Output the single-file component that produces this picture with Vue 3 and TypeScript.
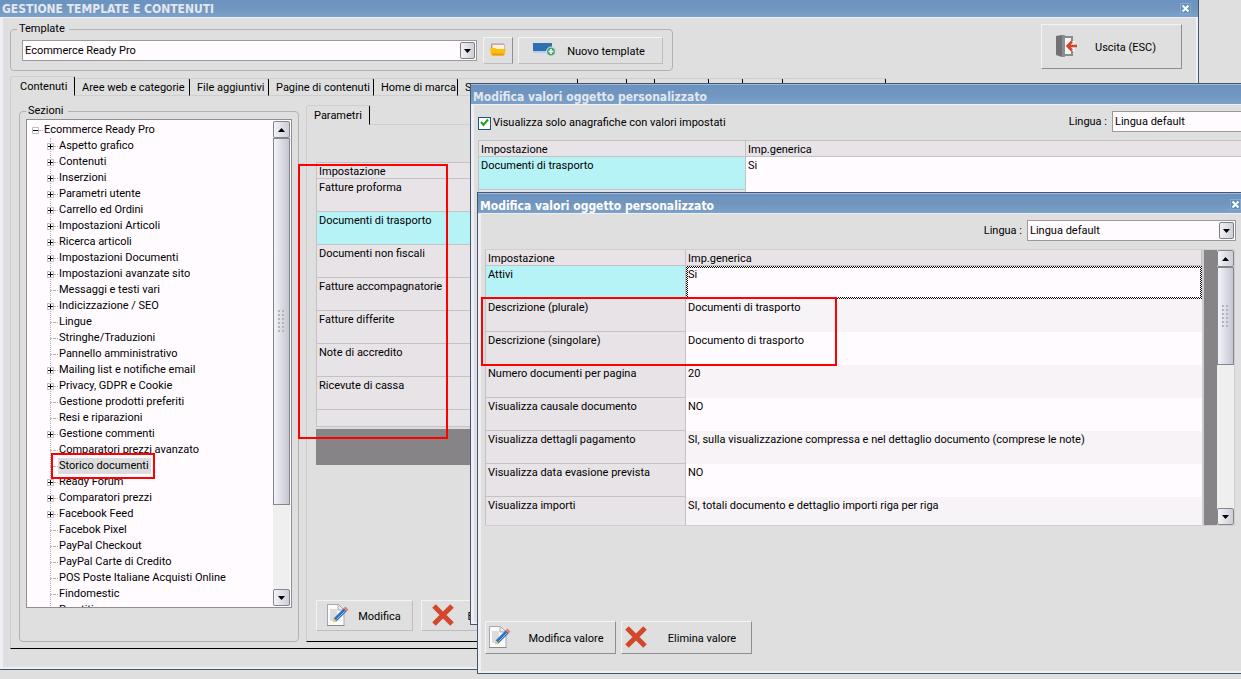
<script setup lang="ts">
import { ref } from 'vue'

interface Tab { label: string; width: number }
interface TreeNode { label: string; branch: boolean }
interface Setting { name: string; value: string }

const tabs: Tab[] = [
  { label: 'Contenuti', width: 65 },
  { label: 'Aree web e categorie', width: 115 },
  { label: 'File aggiuntivi', width: 79 },
  { label: 'Pagine di contenuti', width: 105 },
  { label: 'Home di marca', width: 84 },
  { label: 'S', width: 120 },
  { label: '', width: 49 },
  { label: '', width: 28 },
  { label: '', width: 54 },
  { label: '', width: 34 },
  { label: '', width: 40 },
  { label: '', width: 103 },
]

const sections: TreeNode[] = [
  { label: 'Aspetto grafico', branch: true },
  { label: 'Contenuti', branch: true },
  { label: 'Inserzioni', branch: true },
  { label: 'Parametri utente', branch: true },
  { label: 'Carrello ed Ordini', branch: true },
  { label: 'Impostazioni Articoli', branch: true },
  { label: 'Ricerca articoli', branch: true },
  { label: 'Impostazioni Documenti', branch: true },
  { label: 'Impostazioni avanzate sito', branch: true },
  { label: 'Messaggi e testi vari', branch: false },
  { label: 'Indicizzazione / SEO', branch: true },
  { label: 'Lingue', branch: false },
  { label: 'Stringhe/Traduzioni', branch: false },
  { label: 'Pannello amministrativo', branch: false },
  { label: 'Mailing list e notifiche email', branch: true },
  { label: 'Privacy, GDPR e Cookie', branch: true },
  { label: 'Gestione prodotti preferiti', branch: false },
  { label: 'Resi e riparazioni', branch: false },
  { label: 'Gestione commenti', branch: true },
  { label: 'Comparatori prezzi avanzato', branch: false },
  { label: 'Storico documenti', branch: false },
  { label: 'Ready Forum', branch: true },
  { label: 'Comparatori prezzi', branch: true },
  { label: 'Facebook Feed', branch: true },
  { label: 'Facebok Pixel', branch: false },
  { label: 'PayPal Checkout', branch: false },
  { label: 'PayPal Carte di Credito', branch: false },
  { label: 'POS Poste Italiane Acquisti Online', branch: false },
  { label: 'Findomestic', branch: false },
  { label: 'Prestiti', branch: false },
]

const documentTypes: string[] = [
  'Fatture proforma',
  'Documenti di trasporto',
  'Documenti non fiscali',
  'Fatture accompagnatorie',
  'Fatture differite',
  'Note di accredito',
  'Ricevute di cassa',
]

const settings: Setting[] = [
  { name: 'Attivi', value: 'Si' },
  { name: 'Descrizione (plurale)', value: 'Documenti di trasporto' },
  { name: 'Descrizione (singolare)', value: 'Documento di trasporto' },
  { name: 'Numero documenti per pagina', value: '20' },
  { name: 'Visualizza causale documento', value: 'NO' },
  { name: 'Visualizza dettagli pagamento', value: 'SI, sulla visualizzazione compressa e nel dettaglio documento (comprese le note)' },
  { name: 'Visualizza data evasione prevista', value: 'NO' },
  { name: 'Visualizza importi', value: 'SI, totali documento e dettaglio importi riga per riga' },
]

const activeTab = ref(0)
const activeSection = ref('Storico documenti')
const activeType = ref('Documenti di trasporto')
const onlySet = ref(true)
</script>

<template>
  <main class="desktop">
    <section class="window window-main" aria-label="Gestione template e contenuti">
      <header class="titlebar">
        <h1>GESTIONE TEMPLATE E CONTENUTI</h1>
        <button class="close" type="button" aria-label="Chiudi">
          <svg viewBox="0 0 11 11"><path d="M2.500 2.500l6 6M8.500 2.500l-6 6" stroke="#fff" stroke-width="2" /></svg>
        </button>
      </header>
      <div class="main-body">
        <div class="topbar">
          <fieldset class="group template-group">
            <legend>Template</legend>
            <div class="template-row">
              <div class="combo combo-template">
                <select aria-label="Template"><option>Ecommerce Ready Pro</option></select>
                <span class="drop"><svg viewBox="0 0 7 4"><path d="M0 0h7L3.500 4z" /></svg></span>
              </div>
              <button class="btn btn-folder" type="button" aria-label="Apri">
                <svg class="ico-folder" viewBox="0 0 16 13">
                  <path d="M1.500 1h12.500v6H1.500z" fill="#f2c878" stroke="#b98bd0" stroke-width="1" />
                  <path d="M3 2h11v4H3z" fill="#fff3d8" />
                  <path d="M0 5h5l2 1h9l-1.500 5.500-1 1H2l-1-1z" fill="#fdc012" />
                  <path d="M1.500 10.500h13l-1 2H2.500z" fill="#e79a06" />
                </svg>
              </button>
              <button class="btn btn-new" type="button">
                <svg class="ico-new" viewBox="0 0 23 15">
                  <path d="M0 1h19v9H0z" fill="#2f6fb3" />
                  <path d="M0 9h14v2H0z" fill="#b9cbea" />
                  <circle cx="18" cy="9.500" r="4.500" fill="#47a078" stroke="#d7e8e0" />
                  <path d="M18 7v5M15.500 9.500h5" stroke="#fff" stroke-width="1.500" />
                </svg>
                <span>Nuovo template</span>
              </button>
            </div>
          </fieldset>
          <button class="btn raised btn-exit" type="button">
            <svg class="ico-exit" viewBox="0 0 22 22">
              <path d="M9 2h7v18H9" fill="#f6f4f6" stroke="#8b8b8b" stroke-width="2" />
              <path d="M0 1l6-1h3v22H6l-6-2z" fill="#727274" />
              <path d="M6 0h3v22H6z" fill="#8d8d90" />
              <path d="M14 6h5v10h-5z" fill="#efedef" />
              <path d="M12 11h9M16 6.500L11.500 11l4.500 4.500" fill="none" stroke="#d6452b" stroke-width="2.500" />
            </svg>
            <span>Uscita (ESC)</span>
          </button>
        </div>

        <nav class="tabs" role="tablist">
          <button
            v-for="(tab, i) in tabs"
            :key="i"
            class="tab"
            :class="{ active: i === activeTab }"
            type="button"
            role="tab"
            :aria-selected="i === activeTab"
            :style="{ width: tab.width + 'px' }"
            @click="activeTab = i"
          >{{ tab.label }}</button>
          <span class="tab-rest"></span>
        </nav>

        <div class="panel panel-outer">
          <fieldset class="group sections-group">
            <legend>Sezioni</legend>
            <div class="tree-box">
              <ul class="tree">
                <li>
                  <div class="node root">
                    <button class="expander" type="button" aria-label="Comprimi">
                      <svg viewBox="0 0 7 7"><path d="M.500.500h6v6h-6z" fill="#fff" stroke="#bdbbc0" /><path d="M1 3.500h5" stroke="#000" /></svg>
                    </button>
                    <span class="dots"></span>
                    <span class="caption">Ecommerce Ready Pro</span>
                  </div>
                  <ul class="children">
                    <li v-for="node in sections" :key="node.label" class="node">
                      <button v-if="node.branch" class="expander" type="button" aria-label="Espandi">
                        <svg viewBox="0 0 7 7"><path d="M.500.500h6v6h-6z" fill="#fff" stroke="#bdbbc0" /><path d="M1 3.500h5M3.500 1v5" stroke="#000" /></svg>
                      </button>
                      <span v-else class="expander leaf"></span>
                      <span class="dots"></span>
                      <span
                        class="caption"
                        :class="{ selected: node.label === activeSection }"
                        @click="activeSection = node.label"
                      >{{ node.label }}</span>
                    </li>
                  </ul>
                </li>
              </ul>
              <div class="scroll">
                <button class="arrow" type="button" aria-label="Su"><svg viewBox="0 0 7 4"><path d="M3.500 0L7 4H0z" /></svg></button>
                <div class="thumb thumb-tree"><i class="grip"></i></div>
                <div class="track"></div>
                <button class="arrow" type="button" aria-label="Giù"><svg viewBox="0 0 7 4"><path d="M0 0h7L3.500 4z" /></svg></button>
              </div>
            </div>
          </fieldset>

          <div class="params">
            <nav class="tabs" role="tablist">
              <button class="tab active tab-params" type="button" role="tab" aria-selected="true">Parametri</button>
              <span class="tab-rest"></span>
            </nav>
            <div class="panel params-panel">
              <div class="types-wrap">
                <table class="grid types">
                  <thead><tr><th>Impostazione</th></tr></thead>
                  <tbody>
                    <tr v-for="t in documentTypes" :key="t" @click="activeType = t">
                      <th scope="row" :class="{ current: t === activeType }">{{ t }}</th>
                    </tr>
                    <tr class="short"><th></th></tr>
                  </tbody>
                </table>
              </div>
              <div class="actions">
                <button class="btn btn-edit" type="button">
                  <svg class="ico-edit" viewBox="0 0 22 22">
                    <path d="M.500.500h11L17 6v15.500H.500z" fill="#fbfafc" stroke="#a9a8ac" />
                    <path d="M3 5h7v12H3z" fill="#dcdbde" />
                    <path d="M11 1v5h5" fill="#e9e8ec" stroke="#a9a8ac" />
                    <path d="M8 16L19 5" stroke="#2f73bd" stroke-width="4" />
                    <path d="M9.500 15.500L18 7" stroke="#8bbbe6" stroke-width="1" />
                    <path d="M18 6l2-2" stroke="#e88270" stroke-width="4" />
                    <path d="M6 18.500l1-4 3 3z" fill="#e8c654" />
                    <path d="M0 21.500h17.500" stroke="#8a898d" />
                  </svg>
                  <span>Modifica</span>
                </button>
                <button class="btn btn-delete" type="button">
                  <svg class="ico-x" viewBox="0 0 22 22"><path d="M2 2l18 18M20 2L2 20" stroke="#d3472c" stroke-width="5" /></svg>
                  <span>Elimina</span>
                </button>
              </div>
            </div>
          </div>
        </div>
      </div>
    </section>

    <section class="window window-values" aria-label="Modifica valori oggetto personalizzato">
      <header class="titlebar tall">
        <h2>Modifica valori oggetto personalizzato</h2>
      </header>
      <div class="values-body">
        <div class="filter-row">
          <label class="check">
            <input v-model="onlySet" type="checkbox" />
            <svg class="tick" viewBox="0 0 9 9"><path v-if="onlySet" d="M1 4l2.500 3L8 1.500" fill="none" stroke="#21a121" stroke-width="2" /></svg>
            <span>Visualizza solo anagrafiche con valori impostati</span>
          </label>
          <label class="lang-label" for="lang-back">Lingua :</label>
          <div class="combo combo-back">
            <select id="lang-back"><option>Lingua default</option></select>
          </div>
        </div>
        <table class="grid values">
          <colgroup><col class="col-back" /><col /></colgroup>
          <thead><tr><th>Impostazione</th><th>Imp.generica</th></tr></thead>
          <tbody>
            <tr><th scope="row" class="current">Documenti di trasporto</th><td>Si</td></tr>
            <tr><th scope="row"></th><td></td></tr>
          </tbody>
        </table>
      </div>
    </section>

    <section class="window window-front" aria-label="Modifica valori oggetto personalizzato">
      <header class="titlebar tall focused">
        <h2>Modifica valori oggetto personalizzato</h2>
        <button class="close" type="button" aria-label="Chiudi">
          <svg viewBox="0 0 11 11"><path d="M2.500 2.500l6 6M8.500 2.500l-6 6" stroke="#fff" stroke-width="2" /></svg>
        </button>
      </header>
      <div class="front-body">
        <div class="lang-row">
          <label class="lang-label" for="lang-front">Lingua :</label>
          <div class="combo combo-front">
            <select id="lang-front"><option>Lingua default</option></select>
            <span class="drop"><svg viewBox="0 0 7 4"><path d="M0 0h7L3.500 4z" /></svg></span>
          </div>
        </div>
        <div class="grid-box">
          <div class="grid-view">
            <table class="grid front">
              <colgroup><col class="col-front" /><col /></colgroup>
              <thead><tr><th>Impostazione</th><th>Imp.generica</th></tr></thead>
              <tbody>
                <tr v-for="(s, i) in settings" :key="s.name">
                  <th scope="row" :class="{ current: i === 0 }">{{ s.name }}</th>
                  <td :class="{ editing: i === 0 }"><span>{{ s.value }}</span></td>
                </tr>
              </tbody>
            </table>
          </div>
          <div class="scroll">
            <button class="arrow" type="button" aria-label="Su"><svg viewBox="0 0 7 4"><path d="M3.500 0L7 4H0z" /></svg></button>
            <div class="thumb thumb-front"><i class="grip"></i></div>
            <div class="track"></div>
            <button class="arrow" type="button" aria-label="Giù"><svg viewBox="0 0 7 4"><path d="M0 0h7L3.500 4z" /></svg></button>
          </div>
        </div>
        <div class="actions front-actions">
          <button class="btn raised btn-value" type="button">
            <svg class="ico-edit" viewBox="0 0 22 22">
              <path d="M.500.500h11L17 6v15.500H.500z" fill="#fbfafc" stroke="#a9a8ac" />
              <path d="M3 5h7v12H3z" fill="#dcdbde" />
              <path d="M11 1v5h5" fill="#e9e8ec" stroke="#a9a8ac" />
              <path d="M8 16L19 5" stroke="#2f73bd" stroke-width="4" />
              <path d="M9.500 15.500L18 7" stroke="#8bbbe6" stroke-width="1" />
              <path d="M18 6l2-2" stroke="#e88270" stroke-width="4" />
              <path d="M6 18.500l1-4 3 3z" fill="#e8c654" />
              <path d="M0 21.500h17.500" stroke="#8a898d" />
            </svg>
            <span>Modifica valore</span>
          </button>
          <button class="btn raised btn-value" type="button">
            <svg class="ico-x" viewBox="0 0 22 22"><path d="M2 2l18 18M20 2L2 20" stroke="#d3472c" stroke-width="5" /></svg>
            <span>Elimina valore</span>
          </button>
        </div>
      </div>
    </section>

    <div class="mark mark-section"></div>
    <div class="mark mark-types"></div>
    <div class="mark mark-names"></div>
  </main>
</template>

<style>
body { margin: 0; overflow: hidden; }
</style>

<style scoped>
.desktop {
  position: relative;
  height: 100vh;
  overflow: hidden;
  background: #dfdfdf;
  color: #000;
  font: 11px/16px Roboto, "DejaVu Sans Condensed", sans-serif;
}
.desktop *, .desktop *::before { box-sizing: border-box; }
button, select, input { font: inherit; color: inherit; margin: 0; }
button { padding: 0; border: 0; background: none; }
svg { display: block; }
h1, h2 { margin: 0; font: 700 12px/16px "DejaVu Sans Condensed", "DejaVu Sans", sans-serif; white-space: nowrap; }

/* windows */
.window {
  position: absolute;
  display: flex;
  flex-direction: column;
  background: #dfdfdf;
  border: 1px solid #44566f;
}
.window-main { left: 0; top: 0; right: 42px; bottom: 9px; border-width: 0 1px 1px 0; }
.window-values { left: 470px; top: 83px; right: -60px; bottom: 54px; }
.window-front { left: 477px; top: 192px; right: -4px; bottom: 5px; }
.titlebar {
  display: flex;
  align-items: center;
  justify-content: space-between;
  height: 17px;
  padding: 1px 7px 0 2px;
  background: linear-gradient(#6b93c1, #7195be 50%, #7ca2c9);
  color: #e2e8f0;
}
.titlebar .close { margin-bottom: 2px; }
.titlebar.tall { height: 20px; padding: 4px 3px 0 2px; border-top: 1px solid #9db9d6; }
.titlebar.focused { color: #fff; }
.close { width: 11px; height: 11px; background: #5f8fbd; outline: 1px solid #86a9cc; outline-offset: -1px; }
.main-body {
  flex: 1;
  min-height: 0;
  display: flex;
  flex-direction: column;
  padding: 3px 14px 18px 7px;
  border: solid #efeff5;
  border-width: 1px 2px 2px 3px;
}
.values-body, .front-body {
  flex: 1;
  min-height: 0;
  display: flex;
  flex-direction: column;
  border: solid #eeeef3;
  border-width: 1px 2px 2px 3px;
}
.values-body { padding: 6px 0 0 4px; }
.front-body { padding: 6px 6px 17px 4px; }

/* groups */
.group { margin: 0; padding: 0; border: 1px solid #b2b2b2; border-radius: 4px; min-width: 0; }
.group legend { margin-left: 6px; padding: 0 4px 0 2px; }
.topbar { display: flex; align-items: flex-start; justify-content: space-between; }
.template-row { display: flex; align-items: center; padding: 0 9px 6px 11px; }
.combo { position: relative; height: 21px; border: 1px solid #9a9a9a; background: #fffbff; }
.combo select {
  width: 100%;
  height: 100%;
  padding: 1px 20px 0 2px;
  border: 0;
  outline: 0;
  background: transparent;
  appearance: none;
}
.drop {
  position: absolute;
  right: 1px;
  top: 1px;
  width: 15px;
  height: 17px;
  display: grid;
  place-items: center;
  border: 1px solid #7e7e84;
  border-radius: 2px;
  background: linear-gradient(90deg, #f2f2f8, #cfcfd8);
  pointer-events: none;
}
.drop svg, .arrow svg { width: 7px; height: 4px; }
.combo-template { width: 455px; margin-right: 6px; }

/* buttons */
.btn {
  display: flex;
  align-items: center;
  flex: none;
  border: 1px solid;
  border-color: #f3f3f3 #bdbdbd #bdbdbd #f3f3f3;
  background: #dfdfdf;
  white-space: nowrap;
}
.btn.raised { border-color: #f3f3f3 #8f8f93 #8f8f93 #f3f3f3; }
.btn span { flex: 1; padding-top: 2px; text-align: center; }
.btn-folder { width: 30px; height: 27px; justify-content: center; border-right: 1px solid #8f8f93; margin-right: 5px; }
.ico-folder { width: 16px; height: 13px; margin-bottom: 2px; }
.btn-new { width: 145px; height: 27px; padding: 0 6px 0 14px; }
.ico-new { width: 23px; height: 15px; margin-bottom: 2px; }
.btn-exit { width: 141px; height: 45px; margin-top: 3px; padding: 0 8px 0 14px; }
.ico-exit { width: 22px; height: 22px; margin-bottom: 2px; }
.ico-edit, .ico-x { width: 22px; height: 22px; margin-bottom: 2px; }

/* tabs and panels */
.tabs { display: flex; align-items: flex-end; height: 20px; }
.topbar + .tabs { margin-top: 5px; }
.tab {
  flex: none;
  height: 18px;
  padding: 2px 0 0 7px;
  border: solid #cfcfcf;
  border-width: 1px 1px 1px 0;
  border-right-color: #000;
  border-radius: 3px 2px 0 0;
  line-height: 14px;
  text-align: left;
  white-space: nowrap;
  overflow: hidden;
}
.tab.active { height: 20px; padding-left: 9px; border-left-width: 1px; border-bottom-color: transparent; }
.tab-rest { flex: 1; border-bottom: 1px solid #cfcfcf; }
.panel { border: solid #cdcdcd; border-width: 0 1px 1px; border-bottom: 1px solid #000; }
.panel-outer { flex: 1; min-height: 0; display: flex; padding: 7px 0 6px 8px; }
.sections-group { width: 280px; display: flex; }
.tree-box {
  display: flex;
  width: 266px;
  height: 489px;
  margin-left: 6px;
  border: 1px solid #8f8f93;
  background: #fffbff;
}
.tree { flex: 1; min-width: 0; overflow: hidden; padding-top: 2px; }
ul { list-style: none; margin: 0; padding: 0; }
.node { display: flex; align-items: center; height: 16px; white-space: nowrap; }
.node.root { padding-left: 5px; }
.children { position: relative; padding-left: 20px; }
.children::before {
  content: "";
  position: absolute;
  left: 23px;
  top: 0;
  bottom: 0;
  border-left: 1px dotted #b5b3b8;
}
.expander { position: relative; width: 7px; height: 7px; }
.expander.leaf { width: 4px; height: 1px; margin-left: 3px; border-top: 1px dotted #b5b3b8; }
.dots { width: 4px; border-top: 1px dotted #b5b3b8; }
.caption { padding: 0 2px 0 1px; }
.children .caption.selected { background: #dcdcdc; }

/* scroll bars */
.scroll { width: 17px; flex: none; display: flex; flex-direction: column; background: #efefef; }
.arrow {
  height: 17px;
  display: grid;
  place-items: center;
  border: 1px solid #85858d;
  border-radius: 2px;
  background: linear-gradient(90deg, #f3f3f8, #cdcdd8);
}
.thumb {
  display: grid;
  place-items: center;
  border: 1px solid #85858d;
  background: linear-gradient(90deg, #f3f3f8, #dcdce6 50%, #c6c6d0);
}
.grip {
  width: 7px;
  height: 23px;
  background: radial-gradient(circle at 1px 1px, #b4b4bc 1px, transparent 1px) 0 0 / 4px 4px;
}
.track { flex: 1; }
.tree-box .scroll { margin: 1px; }
.thumb-tree { height: 367px; }
.thumb-front { height: 98px; }

/* parameters */
.params { flex: 1; min-width: 0; display: flex; flex-direction: column; margin: 2px 0 0 7px; }
.tab-params { width: 64px; }
.tab.tab-params { padding-left: 7px; }
.params-panel { flex: 1; min-height: 0; display: flex; flex-direction: column; padding: 37px 0 10px 9px; }
.types-wrap { height: 303px; background: #868486; }
.actions { display: flex; gap: 8px; }
.params-panel .actions { margin-top: auto; }
.btn-edit { width: 97px; height: 31px; padding: 0 2px 0 10px; }
.btn-delete { width: 97px; height: 31px; padding: 0 0 0 10px; }

/* grids */
.grid { width: 100%; border-collapse: separate; border-spacing: 0; table-layout: fixed; }
.grid th, .grid td { height: 33px; padding: 1px 0 0 2px; text-align: left; vertical-align: top; font-weight: 400; white-space: nowrap; }
.grid th { background: #e7e3e7; border: solid #c4c2c5; border-width: 0 1px 1px; }
.grid thead th { height: 17px; padding-top: 3px; border-top-width: 1px; line-height: 12px; }
.grid thead th + th { border-left-width: 0; }
.grid th.current { background: #b5f3f7; }
.grid .short th { height: 17px; }
.grid td { background: #fffbff; }
.types { border-bottom: 2px solid #dcdcdc; }
.filter-row, .lang-row { display: flex; align-items: center; }
.check { position: relative; display: flex; align-items: center; gap: 2px; flex: 1; padding-top: 3px; }
.check input { width: 13px; height: 13px; appearance: none; border: 1px solid #1c5180; background: #fff; }
.tick { position: absolute; left: 2px; top: 6px; width: 9px; height: 9px; pointer-events: none; }
.combo-back { width: 186px; margin-left: 5px; }
.col-back { width: 268px; }
.values { margin-top: 8px; }
.lang-row { justify-content: flex-end; }
.combo-front { width: 209px; margin-left: 5px; }
.grid-box { display: flex; height: 277px; margin: 8px 1px 95px 0; border: 1px solid #cfcfcf; border-left: 0; }
.grid-view { flex: 1; min-width: 0; overflow: hidden; background: #868486; padding-right: 13px; }
.col-front { width: 201px; }
.front { border-right: 2px solid #cfcdd0; }
.front thead th { height: 16px; border-top: 0; }
.front tbody tr:nth-child(even) td { background: #f7f3f7; }
.front td.editing {
  padding: 2px;
  background: conic-gradient(#000 25%, #fff 0 50%, #000 0 75%, #fff 0) 0 0 / 2px 2px;
}
.front td.editing span { display: block; height: 29px; line-height: 14px; background: #fffbff; }
.front-actions { gap: 5px; }
.btn-value { width: 131px; height: 33px; padding: 0 0 0 3px; }
.btn-value span { padding-left: 6px; }

/* highlights laid over the windows */
.mark { position: absolute; border: 2px solid #f00; pointer-events: none; }
.mark-section { left: 51px; top: 453px; width: 104px; height: 26px; }
.mark-types { left: 298px; top: 164px; width: 150px; height: 275px; }
.mark-names { left: 481px; top: 297px; width: 356px; height: 69px; }
</style>
